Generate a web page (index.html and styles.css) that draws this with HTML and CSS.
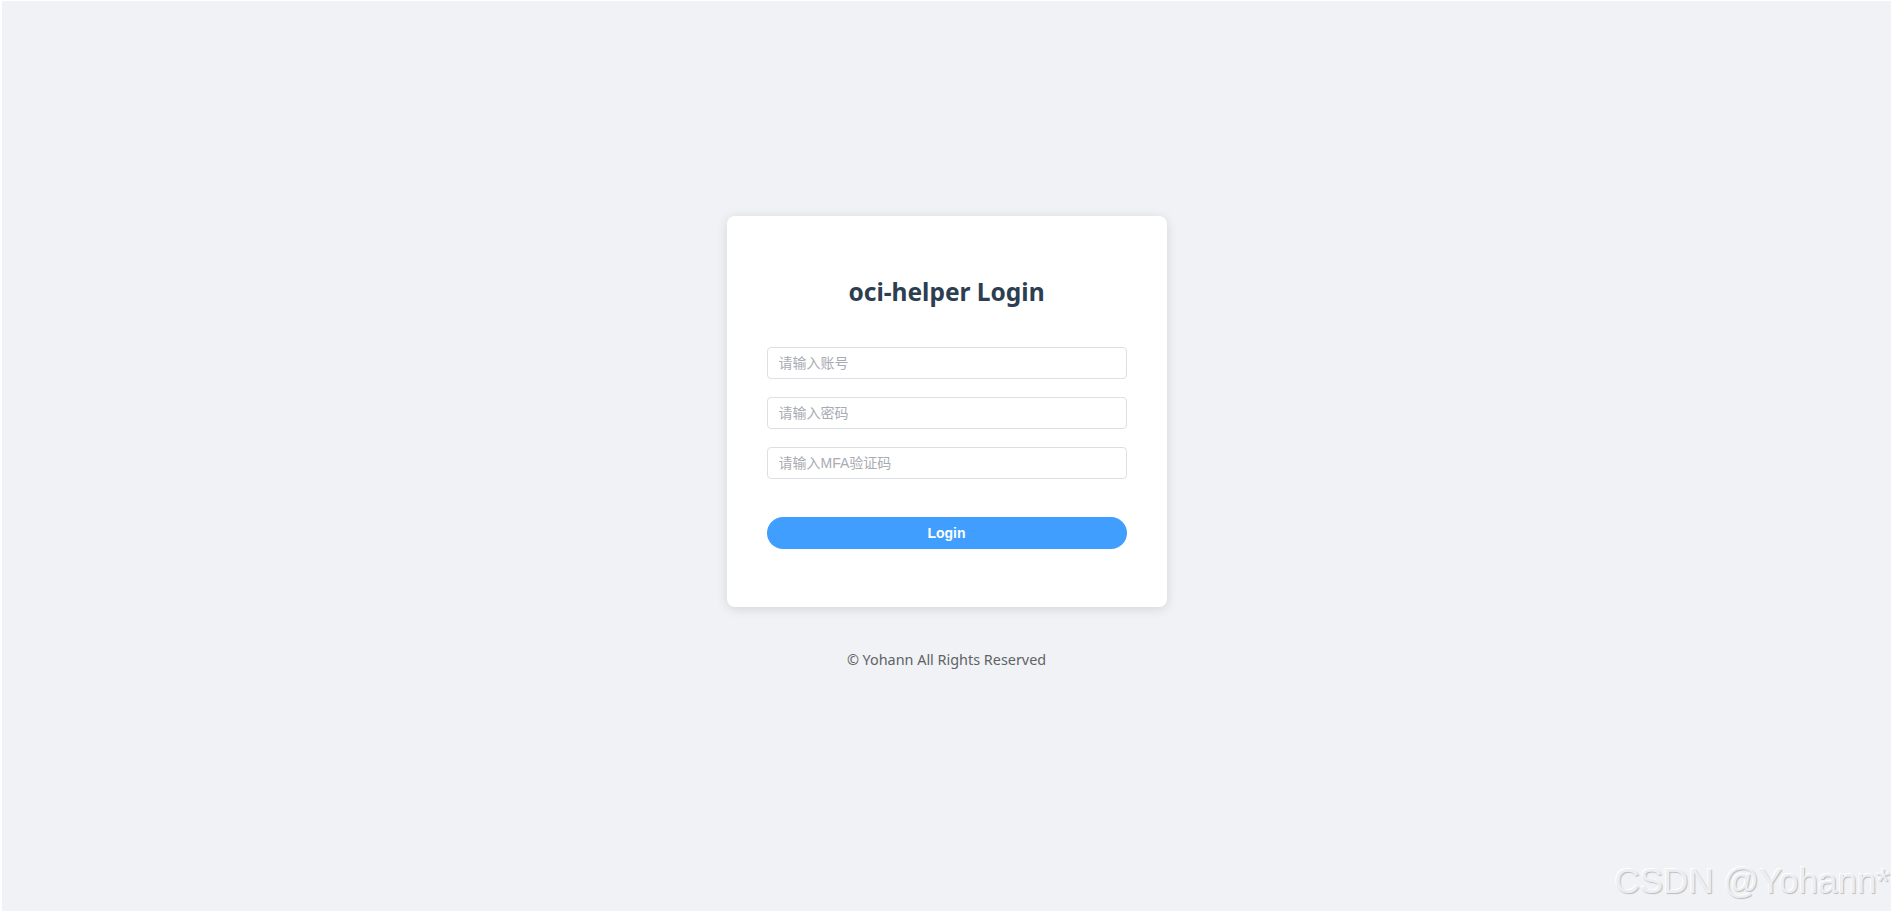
FILE: index.html
```html
<!DOCTYPE html>
<html lang="zh-CN">
<head>
<meta charset="utf-8">
<title>oci-helper Login</title>
<link rel="stylesheet" href="styles.css">
</head>
<body>
<div class="page">
  <div class="card">
    <h2 class="title">oci-helper Login</h2>
    <form class="form">
      <input class="field" type="text" placeholder="请输入账号">
      <input class="field" type="password" placeholder="请输入密码">
      <input class="field" type="text" placeholder="请输入MFA验证码">
      <button class="btn" type="button">Login</button>
    </form>
  </div>
  <div class="footer">© Yohann All Rights Reserved</div>
  <div class="watermark">CSDN @Yohann*</div>
</div>
</body>
</html>
```
FILE: styles.css
```css
html, body {
  margin: 0;
  padding: 0;
  background: #ffffff;
}
body {
  padding: 1px 3px 1px 2px;
}
.page {
  position: relative;
  height: 910px;
  box-sizing: border-box;
  background: #f0f2f5;
  display: flex;
  flex-direction: column;
  align-items: center;
  padding-top: 215px;
  font-family: "Noto Sans", "Noto Sans CJK SC", sans-serif;
}
.card {
  width: 440px;
  box-sizing: border-box;
  padding: 40px 40px 58px;
  background: #ffffff;
  border-radius: 8px;
  box-shadow: 0 2px 12px rgba(0, 0, 0, 0.12);
}
.title {
  margin: 20px 0 39px;
  text-align: center;
  font-size: 24.5px;
  line-height: 32px;
  font-weight: 700;
  color: #2c3e50;
}
.form {
  display: flex;
  flex-direction: column;
  margin: 0;
}
.field {
  height: 32px;
  box-sizing: border-box;
  border: 1px solid #dcdfe6;
  border-radius: 4px;
  padding: 1px 11px;
  margin: 0 0 18px;
  font-family: "Liberation Sans", "Noto Sans CJK SC", sans-serif;
  font-size: 14px;
  color: #606266;
  outline: none;
  background: #fff;
}
.field::placeholder {
  color: #a8abb2;
}
.form .field:nth-of-type(3) {
  margin-bottom: 38px;
}
.btn {
  height: 32px;
  border: none;
  border-radius: 16px;
  background: #409eff;
  color: #ffffff;
  font-family: "Liberation Sans", sans-serif;
  font-size: 14px;
  font-weight: 700;
  cursor: pointer;
}
.footer {
  margin-top: 43px;
  font-size: 14.4px;
  line-height: 20px;
  color: #606266;
}
.watermark {
  position: absolute;
  right: 1px;
  bottom: 12px;
  font-family: "Liberation Sans", sans-serif;
  font-size: 35px;
  line-height: 36px;
  color: #eceef2;
  text-shadow: 1px 1px 1px #b8bbc0, -1px -1px 0 #ffffff;
}
```
